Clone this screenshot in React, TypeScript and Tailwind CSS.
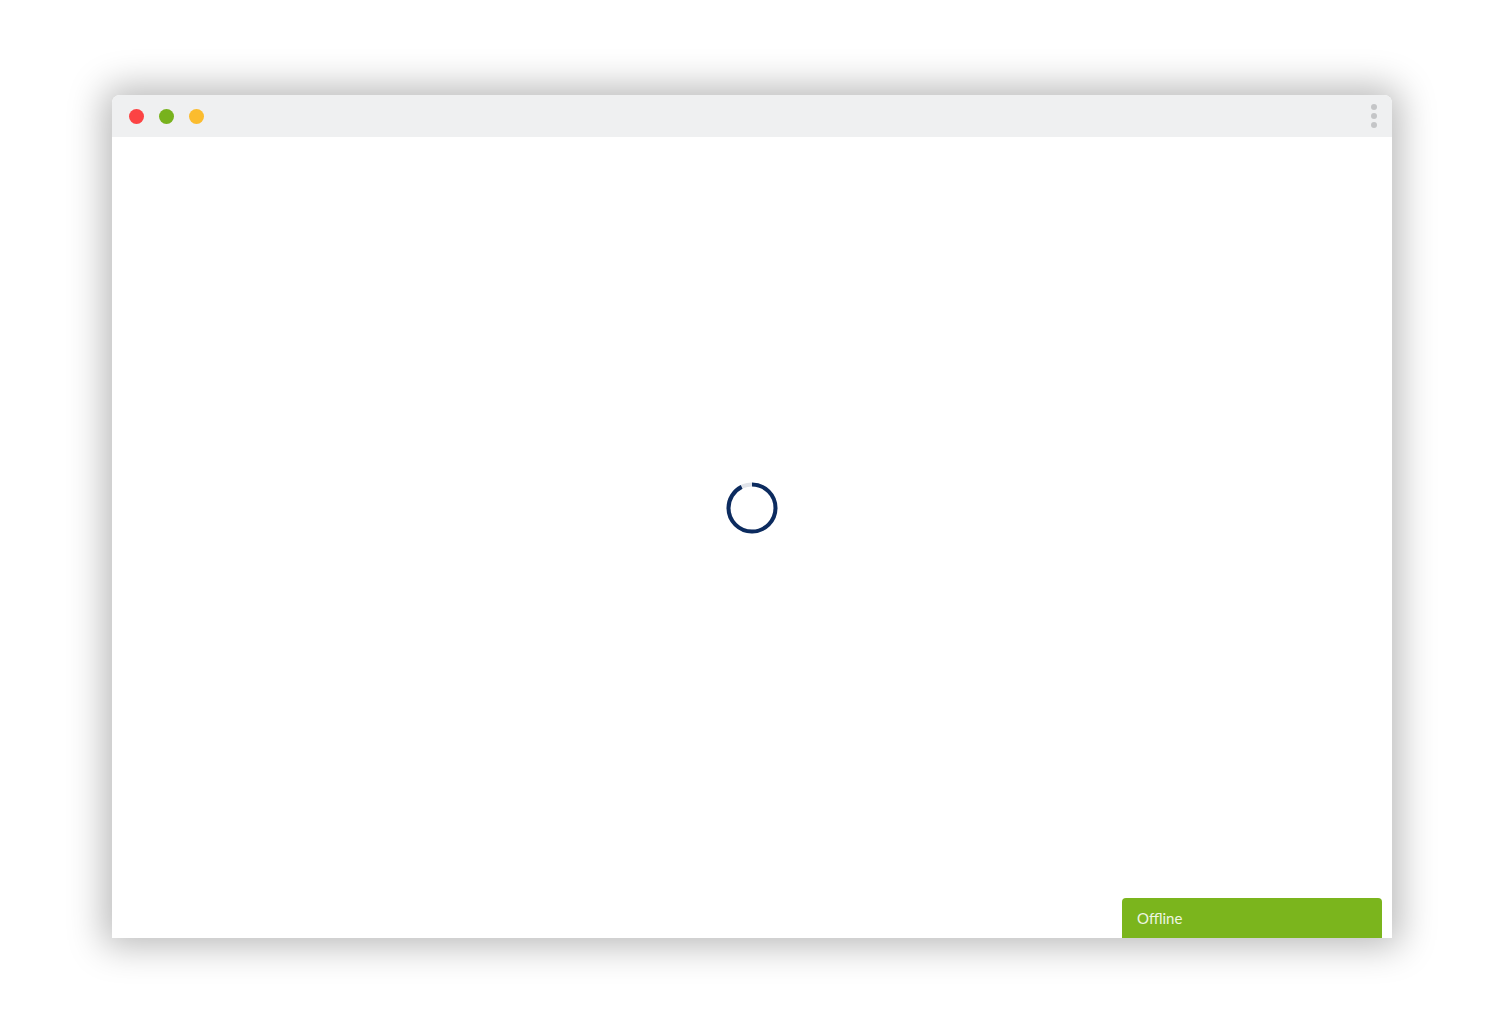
export default function App() {
  return (
    <div className="min-h-[1018px] w-full bg-white pt-[95px]" style={{ fontFamily: 'Lato, "Open Sans", sans-serif' }}>
      {/* window frame */}
      <div className="relative mx-auto flex h-[843px] w-[1280px] flex-col rounded-t-[8px] bg-white shadow-[0_0_36px_8px_rgba(0,0,0,0.28)]">
        {/* title bar */}
        <div className="flex h-[42px] items-center justify-between rounded-t-[8px] bg-[#eff0f1] pl-[17px] pr-[15px]">
          <div className="flex items-center gap-[15px]">
            <span className="h-[15px] w-[15px] rounded-full bg-[#fc4344]" />
            <span className="h-[15px] w-[15px] rounded-full bg-[#78b21d]" />
            <span className="h-[15px] w-[15px] rounded-full bg-[#fbbc2e]" />
          </div>
          <div className="flex flex-col items-center gap-[3px]">
            <span className="h-[6px] w-[6px] rounded-full bg-[#c4c5c7]" />
            <span className="h-[6px] w-[6px] rounded-full bg-[#c4c5c7]" />
            <span className="h-[6px] w-[6px] rounded-full bg-[#c4c5c7]" />
          </div>
        </div>

        {/* body */}
        <div className="flex flex-1 justify-center pt-[345px]">
          <svg width="52" height="52" viewBox="0 0 52 52">
            <circle cx="26" cy="26" r="23.5" fill="none" stroke="#e1e4ea" strokeWidth="4" />
            <circle
              cx="26"
              cy="26"
              r="23.5"
              fill="none"
              stroke="#0c2b5f"
              strokeWidth="4"
              strokeDasharray="136 147.65"
              transform="rotate(-90 26 26)"
            />
          </svg>
        </div>

        {/* offline status */}
        <div className="absolute bottom-0 right-[10px] flex h-[40px] w-[260px] items-center rounded-t-[4px] bg-[#7bb51d] px-[15px] text-[15px] text-[#eef6e2]">
          Offline
        </div>
      </div>
    </div>
  )
}
